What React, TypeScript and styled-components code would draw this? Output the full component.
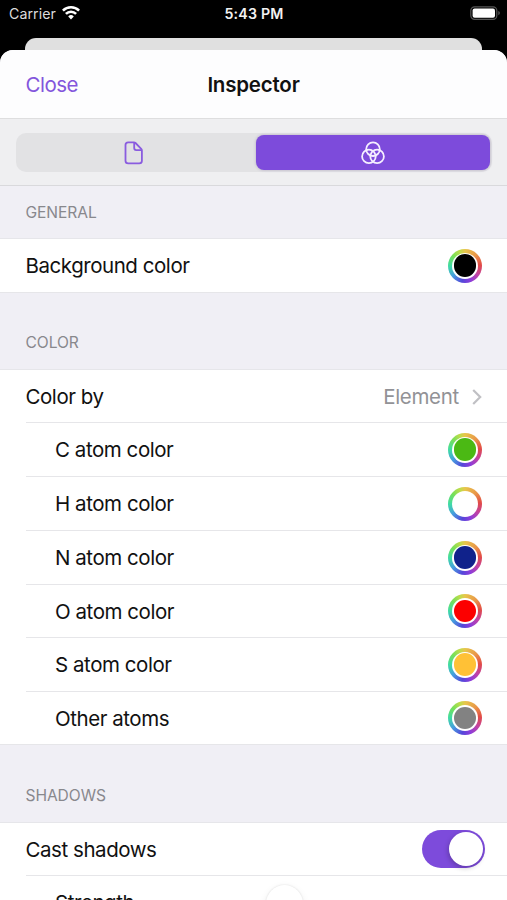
import React from 'react';
import styled, { createGlobalStyle } from 'styled-components';

const PURPLE = '#7d4bdb';

const GlobalStyle = createGlobalStyle`
  * { box-sizing: border-box; }
  html, body { margin: 0; height: 100%; overflow: hidden; background: #000; }
  body { font-family: Inter, "Liberation Sans", sans-serif; color: #111; }
`;

const Screen = styled.div`
  width: 507px;
  height: 900px;
  overflow: hidden;
  background: #000;
  display: flex;
  flex-direction: column;
`;

const StatusBar = styled.header`
  flex: none;
  height: 38px;
  padding: 0 7px 0 9px;
  display: grid;
  grid-template-columns: 1fr auto 1fr;
  align-items: start;
  color: #f2f2f2;
`;

const Carrier = styled.div`
  display: flex;
  gap: 6px;
  padding-top: 5px;
  font-size: 14.2px;
  line-height: 18px;
  letter-spacing: 0.07px;
  color: #dcdcdc;
`;

const Clock = styled.div`
  padding: 5px 0 0;
  margin-left: -1px;
  font-size: 14.2px;
  line-height: 18px;
  font-weight: 600;
  letter-spacing: 0.2px;
`;

const Battery = styled.div`
  justify-self: end;
  padding-top: 6px;
  svg { display: block; }
`;

const BackCard = styled.div`
  flex: none;
  height: 12px;
  margin: 0 25px;
  border-radius: 11px 11px 0 0;
  background: #e0e0e0;
`;

const Sheet = styled.main`
  flex: 1;
  min-height: 0;
  overflow: hidden;
  border-radius: 13px 13px 0 0;
  background: #f0eff5;
`;

const NavBar = styled.div`
  height: 69px;
  padding: 1px 25.5px 0;
  display: grid;
  grid-template-columns: 1fr auto 1fr;
  align-items: center;
  background: #fdfdfe;
  border-bottom: 1px solid #dededf;
`;

const CloseButton = styled.button`
  justify-self: start;
  padding: 0;
  border: 0;
  background: none;
  color: #8355dc;
  font: 400 20.5px/26px Inter, sans-serif;
  letter-spacing: -0.5px;
`;

const Title = styled.h1`
  margin: 0;
  font-size: 20.5px;
  line-height: 26px;
  font-weight: 600;
  letter-spacing: -0.2px;
`;

const SegmentBar = styled.div`
  height: 67px;
  padding: 14px 15px 14px 16px;
  background: #efeff1;
  border-bottom: 1px solid #d9d9dc;
`;

const Segments = styled.div`
  height: 39px;
  padding: 2px 2px 2px 0;
  border-radius: 10px;
  background: #e2e2e4;
  display: grid;
  grid-template-columns: 240px 1fr;
`;

const Segment = styled.button<{ $active?: boolean }>`
  padding: 0;
  border: 0;
  border-radius: 8px;
  display: flex;
  align-items: center;
  justify-content: center;
  color: ${p => (p.$active ? '#f5efff' : '#8a5cdf')};
  background: ${p => (p.$active ? PURPLE : 'transparent')};
  box-shadow: ${p => (p.$active ? '0 0 3px rgba(70, 40, 120, 0.3)' : 'none')};
  svg { display: block; margin-left: ${p => (p.$active ? 0 : -4)}px; }
`;

const SectionHeader = styled.h2<{ $height: number; $gap?: number }>`
  margin: 0;
  height: ${p => p.$height}px;
  padding: 0 25.5px ${p => p.$gap ?? 16}px;
  display: flex;
  align-items: flex-end;
  border-bottom: 1px solid #e6e6ea;
  color: #88888d;
  font-size: 15.6px;
  line-height: 20px;
  font-weight: 400;
  letter-spacing: -0.08px;
`;

const Row = styled.div<{ $height: number; $nested?: boolean; $last?: boolean }>`
  height: ${p => p.$height}px;
  padding: 0 25px 0 ${p => (p.$nested ? 55 : 25.5)}px;
  background: #fff;
  display: flex;
  position: relative;
  align-items: center;
  justify-content: space-between;
  &::after {
    content: '';
    position: absolute;
    left: ${p => (p.$last ? 0 : 26)}px;
    right: 0;
    bottom: 0;
    height: 1px;
    background: #e6e6e9;
  }
`;

const Label = styled.span`
  font-size: 20.5px;
  line-height: 26px;
  letter-spacing: -0.45px;
  white-space: nowrap;
`;

const Value = styled.span`
  display: flex;
  align-items: center;
  gap: 13px;
  color: #929296;
  font-size: 20.5px;
  line-height: 26px;
  letter-spacing: -0.3px;
`;

const Well = styled.span`
  width: 34px;
  height: 34px;
  margin-top: -1px;
  padding: 4px;
  border-radius: 50%;
  background: conic-gradient(#e7c64b, #e99648 45deg, #e24b46 85deg, #c142a5 125deg, #8b3ddb 160deg, #5546d9 190deg, #469cdf 230deg, #3fdca5 270deg, #76e058 310deg, #bddc4b 340deg, #e7c64b);
`;

const WellGap = styled.span`
  display: block;
  width: 26px;
  height: 26px;
  padding: 1.8px;
  border-radius: 50%;
  background: #fff;
`;

const WellInner = styled.span<{ $color: string }>`
  display: block;
  width: 22.4px;
  height: 22.4px;
  border-radius: 50%;
  background: ${p => p.$color};
`;

const Switch = styled.span`
  width: 63px;
  height: 38px;
  margin: -1px -3px 0 0;
  padding: 2px;
  border-radius: 19px;
  background: ${PURPLE};
  display: flex;
  justify-content: flex-end;
`;

const Knob = styled.span`
  width: 34px;
  height: 34px;
  border-radius: 50%;
  background: #fff;
  box-shadow: -1px 2px 5px rgba(0, 0, 0, 0.22);
`;

const SliderThumb = styled.span`
  width: 37px;
  height: 37px;
  margin-right: 179px;
  border-radius: 50%;
  background: #fff;
  box-shadow: 0 0 2px rgba(0, 0, 0, 0.13), 0 3px 8px rgba(0, 0, 0, 0.08);
`;

const atoms = [
  { label: 'C atom color', color: '#4bb914', height: 54 },
  { label: 'H atom color', color: '#ffffff', height: 54 },
  { label: 'N atom color', color: '#10228b', height: 54 },
  { label: 'O atom color', color: '#fc0000', height: 53 },
  { label: 'S atom color', color: '#ffc136', height: 54 },
  { label: 'Other atoms', color: '#828282', height: 53 },
];

function ColorWell({ color }: { color: string }) {
  return (
    <Well>
      <WellGap><WellInner $color={color} /></WellGap>
    </Well>
  );
}

export default function App() {
  return (
    <Screen>
      <GlobalStyle />
      <StatusBar>
        <Carrier>
          Carrier
          <svg width="18" height="15" viewBox="0 0 18 15" fill="none" stroke="#fff" strokeWidth="2.6">
            <path d="M.9 5.6a11.5 11.5 0 0 1 16.2 0" />
            <path d="M3.9 8.8a7.2 7.2 0 0 1 10.2 0" />
            <path d="M9 14.4 6.2 11.4a4.1 4.1 0 0 1 5.6 0Z" fill="#fff" stroke="none" />
          </svg>
        </Carrier>
        <Clock>5:43 PM</Clock>
        <Battery>
          <svg width="30" height="14" viewBox="0 0 30 14">
            <rect x=".8" y=".8" width="26" height="12.6" rx="3.8" fill="none" stroke="#565656" strokeWidth="1.2" />
            <rect x="2.6" y="2.5" width="22.4" height="9.2" rx="2" fill="#fff" />
            <path d="M28.3 5v4.2q1.6-.6 1.6-2.1T28.3 5Z" fill="#565656" />
          </svg>
        </Battery>
      </StatusBar>
      <BackCard />
      <Sheet>
        <NavBar>
          <CloseButton>Close</CloseButton>
          <Title>Inspector</Title>
        </NavBar>
        <SegmentBar>
          <Segments>
            <Segment aria-label="Document">
              <svg width="20" height="24" viewBox="0 0 20 24" fill="none" stroke="currentColor" strokeWidth="1.8" strokeLinejoin="round">
                <path d="M4.2 1.3h5.6q1 0 1.7.7l5.7 5.9q.7.7.7 1.7v10.1q0 2.7-2.6 2.7H4.2q-2.7 0-2.7-2.7V4q0-2.7 2.7-2.7Z" />
                <path d="M10.2 1.5v5.6q0 2 2 2h5.5" />
              </svg>
            </Segment>
            <Segment $active aria-label="Appearance">
              <svg width="24" height="24" viewBox="0 0 24 24" fill="none" stroke="currentColor" strokeWidth="1.8">
                <circle cx="12" cy="8.2" r="6.8" />
                <circle cx="7.9" cy="15.4" r="6.8" />
                <circle cx="16.1" cy="15.4" r="6.8" />
              </svg>
            </Segment>
          </Segments>
        </SegmentBar>

        <SectionHeader $height={53} $gap={15}>GENERAL</SectionHeader>
        <Row $height={54} $last>
          <Label>Background color</Label>
          <ColorWell color="#000" />
        </Row>

        <SectionHeader $height={77}>COLOR</SectionHeader>
        <Row $height={53}>
          <Label>Color by</Label>
          <Value>
            Element
            <svg width="10" height="16" viewBox="0 0 10 16" fill="none" stroke="#c0c0c4" strokeWidth="2.2">
              <path d="m1.2 1 7 7-7 7" />
            </svg>
          </Value>
        </Row>
        {atoms.map((atom, i) => (
          <Row key={atom.label} $nested $height={atom.height} $last={i === atoms.length - 1}>
            <Label>{atom.label}</Label>
            <ColorWell color={atom.color} />
          </Row>
        ))}

        <SectionHeader $height={78}>SHADOWS</SectionHeader>
        <Row $height={53}>
          <Label>Cast shadows</Label>
          <Switch><Knob /></Switch>
        </Row>
        <Row $height={54} $nested>
          <Label>Strength</Label>
          <SliderThumb />
        </Row>
      </Sheet>
    </Screen>
  );
}
